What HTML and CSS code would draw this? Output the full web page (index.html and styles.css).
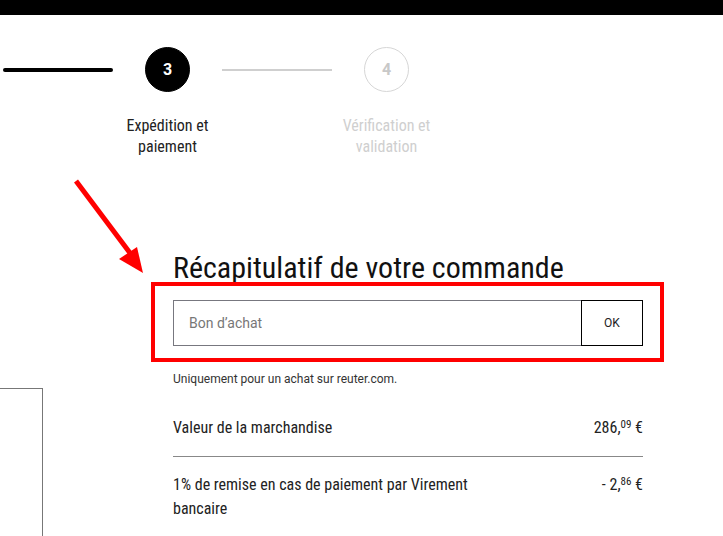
FILE: index.html
```html
<!DOCTYPE html>
<html lang="fr">
<head>
<meta charset="utf-8">
<title>Récapitulatif</title>
<link rel="stylesheet" href="styles.css">
</head>
<body>
<div class="topbar"></div>
<div class="stepper">
  <div class="line done"></div>
  <div class="circle active">3</div>
  <div class="line"></div>
  <div class="circle">4</div>
  <div class="label-spacer"></div>
  <div class="label active">Expédition et paiement</div>
  <div class="label-spacer"></div>
  <div class="label">Vérification et validation</div>
</div>
<div class="page">
  <aside class="side"><span class="side-text">t</span></aside>
  <main class="summary">
    <h1 class="title">Récapitulatif de votre commande</h1>
    <div class="voucher">
      <input class="voucher-input" type="text" placeholder="Bon d’achat">
      <button class="voucher-btn">OK</button>
    </div>
    <p class="note">Uniquement pour un achat sur reuter.com.</p>
    <div class="row">
      <span class="row-label">Valeur de la marchandise</span>
      <span class="price">286,<sup>09</sup> €</span>
    </div>
    <div class="row row-last">
      <span class="row-label">1% de remise en cas de paiement par Virement bancaire</span>
      <span class="price">- 2,<sup>86</sup> €</span>
    </div>
    <div class="highlight"></div>
    <svg class="arrow" width="90" height="100" viewBox="0 0 90 100">
      <line x1="3" y1="2" x2="60" y2="78" stroke="#ff0000" stroke-width="5"/>
      <polygon points="46,80 64,68 70,94" fill="#ff0000"/>
    </svg>
  </main>
</div>
</body>
</html>
```
FILE: styles.css
```css
html, body {
  margin: 0;
  padding: 0;
  background: #fff;
  overflow: hidden;
}
body {
  font-family: "Roboto Condensed", Roboto, "Liberation Sans", sans-serif;
  color: #222;
  width: 723px;
  height: 536px;
}
.topbar {
  height: 15px;
  background: #000;
}
.stepper {
  display: grid;
  grid-template-columns: 110px 45px 110px 45px;
  column-gap: 32px;
  padding: 32px 0 0 3px;
  align-items: center;
}
.line {
  height: 2px;
  background: #cfcfcf;
}
.line.done {
  height: 4px;
  background: #000;
  border-radius: 2px;
}
.circle {
  width: 45px;
  height: 45px;
  box-sizing: border-box;
  border-radius: 50%;
  border: 1px solid #d6d6d6;
  color: #c8c8c8;
  display: flex;
  align-items: center;
  justify-content: center;
  font-family: Roboto, sans-serif;
  font-weight: 700;
  font-size: 16px;
}
.circle.active {
  background: #000;
  border-color: #000;
  color: #fff;
}
.label {
  justify-self: center;
  width: 120px;
  text-align: center;
  font-size: 16px;
  line-height: 21px;
  color: #cfcfcf;
  margin-top: 23px;
}
.label.active {
  color: #222;
}
.page {
  display: flex;
  gap: 130px;
  margin-top: 94px;
}
.side {
  width: 42px;
  flex: none;
  margin-top: 137px;
  height: 200px;
  border-top: 1px solid #777;
  border-right: 1px solid #777;
  position: relative;
}
.side-text {
  position: absolute;
  left: -4px;
  top: 73px;
  font-family: "Liberation Sans", sans-serif;
  font-size: 13px;
  color: #222;
}
.summary {
  width: 470px;
  position: relative;
}
.title {
  margin: 0;
  font-weight: 400;
  font-size: 30px;
  line-height: 34px;
  color: #111;
}
.voucher {
  display: flex;
  margin-top: 15px;
  height: 46px;
}
.voucher-input {
  flex: 1;
  box-sizing: border-box;
  height: 46px;
  border: 1px solid #77777f;
  border-right: none;
  padding: 0 15px;
  font-family: Roboto, sans-serif;
  font-size: 14px;
  color: #222;
  outline: none;
  margin: 0;
}
.voucher-input::placeholder {
  color: #777;
}
.voucher-btn {
  width: 62px;
  height: 46px;
  box-sizing: border-box;
  border: 1px solid #000;
  background: #fff;
  font-family: Roboto, sans-serif;
  font-size: 12px;
  color: #222;
  margin: 0;
  padding: 0;
}
.note {
  margin: 26px 0 0;
  font-family: Roboto, sans-serif;
  font-size: 12px;
  line-height: 14px;
  color: #333;
}
.row {
  display: flex;
  justify-content: space-between;
  gap: 40px;
  font-size: 16px;
  line-height: 24px;
  padding: 30px 0 14px;
  border-bottom: 1px solid #888;
}
.row-last {
  border-bottom: none;
  padding-top: 16px;
}
.row-label {
  max-width: 320px;
}
.price {
  white-space: nowrap;
}
.price sup {
  font-size: 11px;
  vertical-align: 0;
  position: relative;
  top: -5px;
}
.highlight {
  position: absolute;
  left: -22px;
  top: 31px;
  width: 513px;
  height: 80px;
  box-sizing: border-box;
  border: 4px solid #ff0000;
  pointer-events: none;
}
.arrow {
  position: absolute;
  left: -100px;
  top: -72px;
  overflow: visible;
}
```
